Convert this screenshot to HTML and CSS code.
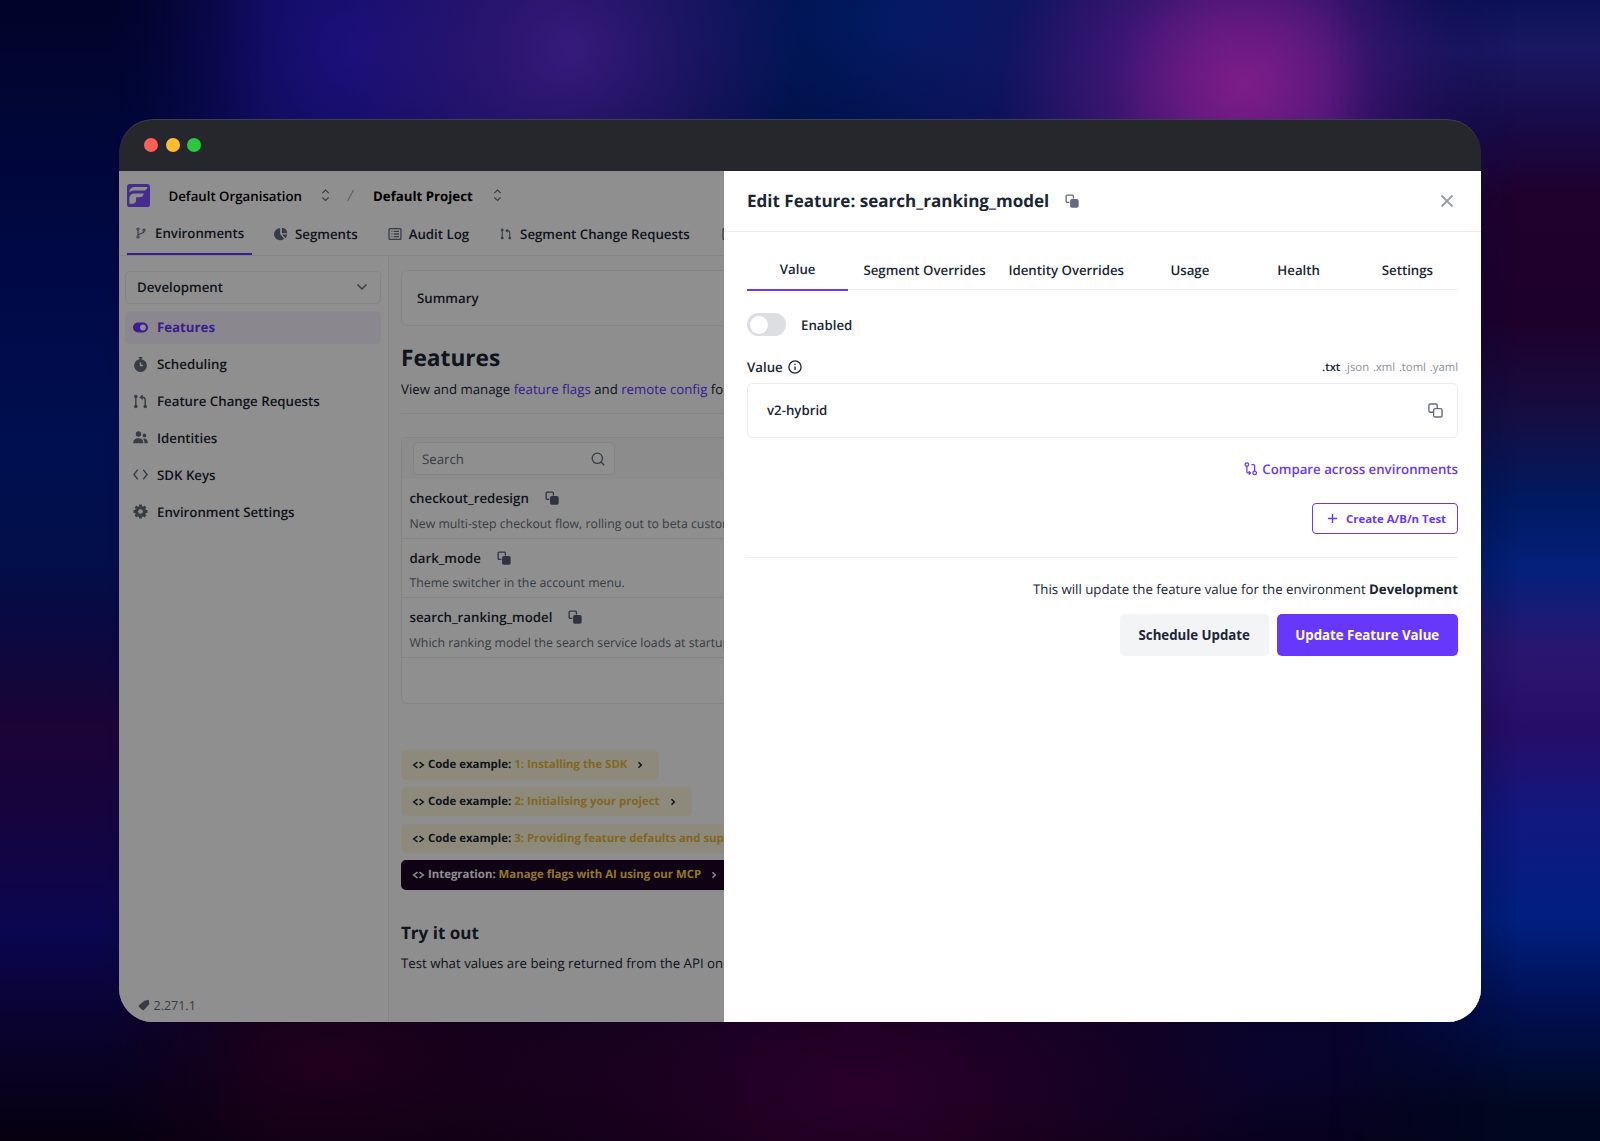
FILE: index.html
```html
<!doctype html>
<html lang="en">
  <head>
    <meta charset="UTF-8" />
    <title>Edit Feature: search_ranking_model</title>
    <link rel="stylesheet" href="styles.css">
  </head>
  <body>
    <svg class="sprite" aria-hidden="true">
      <symbol id="i-sort" viewBox="0 0 10 14"><path d="M1.4 4.6 5 1.2l3.6 3.4M1.4 9.4 5 12.8l3.6-3.4" /></symbol>
      <symbol id="i-branch" viewBox="0 0 16 16"><circle cx="4" cy="2.8" r="1.5" /><circle cx="4" cy="13.2" r="1.5" /><circle cx="12" cy="4.4" r="1.5" /><path d="M4 4.3v7.4M12 6c0 3.6-8 1.6-8 5.5" /></symbol>
      <symbol id="i-pie" viewBox="0 0 16 16"><path class="solid" d="M7 1.2V8l4.6 5.5A7 7 0 1 1 7 1.2zM9 .8A6.8 6.8 0 0 1 15.2 7H9zM9.4 8.6h5.7a6.6 6.6 0 0 1-2.2 4.2z" /></symbol>
      <symbol id="i-list" viewBox="0 0 16 16"><rect x="1.2" y="1.8" width="13.6" height="12.4" rx="1" /><path d="M4 5h1M6.5 5h6M4 8h1M6.5 8h6M4 11h1M6.5 11h6" /></symbol>
      <symbol id="i-pr" viewBox="0 0 16 16"><circle class="solid" cx="3" cy="2.6" r="1.9" /><circle class="solid" cx="3" cy="13.4" r="1.9" /><circle class="solid" cx="13" cy="13.4" r="1.9" /><path d="M3 3v10M13 12V6.5c0-2-1.2-3-3-3H8.5" /><path class="solid" d="M10.3 .6v5.8L6.8 3.5z" /></symbol>
      <symbol id="i-down" viewBox="0 0 12 8"><path d="M1.5 1.5 6 6l4.5-4.5" /></symbol>
      <symbol id="i-toggle" viewBox="0 0 16 16"><rect class="solid" x="0" y="2.7" width="16" height="10.6" rx="5.3" /><circle class="hole" cx="10.6" cy="8" r="3.1" /></symbol>
      <symbol id="i-timer" viewBox="0 0 16 16"><path class="solid" d="M6 0h4v1.4H9v1A6.8 6.8 0 1 1 7 2.4v-1H6z" /><path class="hole-line" d="M8 5.8V9h2.6" /></symbol>
      <symbol id="i-people" viewBox="0 0 16 16"><circle class="solid" cx="5.8" cy="4.2" r="2.9" /><circle class="solid" cx="12.2" cy="5.8" r="2" /><path class="solid" d="M.3 14c0-3.7 2-5.3 5.5-5.3s5.2 1.6 5.2 5.3zM10.8 9.2c2.9-.7 5 .8 5 4.8h-3.6c0-2-.4-3.6-1.4-4.8z" /></symbol>
      <symbol id="i-code" viewBox="0 0 16 16"><path d="M5 3 1 8l4 5M11 3l4 5-4 5" /></symbol>
      <symbol id="i-gear" viewBox="0 0 16 16"><circle cx="8" cy="8" r="4.4" stroke-width="3.2" /><path d="M8 .5v15M.5 8h15M2.7 2.7l10.6 10.6M13.3 2.7 2.7 13.3" stroke-width="3" /><circle class="hole" cx="8" cy="8" r="2.5" /></symbol>
      <symbol id="i-tag" viewBox="0 0 16 16"><path class="solid" d="M8.5 2.2 14.5 1 15 7 7.8 14.6a1.4 1.4 0 0 1-2 0L1.2 10.4a1.4 1.4 0 0 1 0-2z" /></symbol>
      <symbol id="i-search" viewBox="0 0 16 16"><circle cx="7.2" cy="7.2" r="5.9" /><path d="m11.5 11.5 3.6 3.6" /></symbol>
      <symbol id="i-copy" viewBox="0 0 16 16"><path d="M5 9.6H2.5A1.2 1.2 0 0 1 1.3 8.4V2.5a1.2 1.2 0 0 1 1.2-1.2h5.9a1.2 1.2 0 0 1 1.2 1.2V5" /><rect class="solid" x="5.8" y="5.8" width="9.8" height="9.8" rx="2" /></symbol>
      <symbol id="i-copy-line" viewBox="0 0 16 16"><path d="M5.8 9.8H2.5a1.5 1.5 0 0 1-1.5-1.5V2.5A1.5 1.5 0 0 1 2.5 1h5.8a1.5 1.5 0 0 1 1.5 1.5v3.3" /><rect x="6" y="6" width="9" height="9" rx="1.8" /></symbol>
      <symbol id="i-angles" viewBox="0 0 12 10"><path d="M5 2.2 1.2 5 5 7.8M7 2.2 10.8 5 7 7.8" /></symbol>
      <symbol id="i-right" viewBox="0 0 6 10"><path d="m1.5 2.2 2.8 2.8-2.8 2.8" /></symbol>
      <symbol id="i-close" viewBox="0 0 14 14"><path d="m1.5 1.5 11 11M12.5 1.5l-11 11" /></symbol>
      <symbol id="i-info" viewBox="0 0 16 16"><circle cx="8" cy="8" r="7" /><path d="M8 7.4v4M8 4.4v1.2" /></symbol>
      <symbol id="i-compare" viewBox="0 0 16 16"><circle cx="3.4" cy="3" r="2.1" /><circle cx="12.6" cy="13" r="2.1" /><path d="M3.4 5v6.5c0 1 .6 1.5 1.5 1.5h2.6M5.7 11l2 2-2 2M12.6 11V4.5c0-1-.6-1.5-1.5-1.5H8.8" /></symbol>
      <symbol id="i-plus" viewBox="0 0 12 12"><path d="M6 1v10M1 6h10" /></symbol>
    </svg>

    <div class="window">
      <div class="titlebar">
        <span class="dot red"></span>
        <span class="dot yellow"></span>
        <span class="dot green"></span>
      </div>

      <div class="window-body">
        <div class="app">
          <header class="topbar">
            <svg class="logo" viewBox="0 0 24 24">
              <rect width="24" height="24" rx="3" fill="#7b51fb" />
              <path d="M2.5 8.5C2.5 5 5 3 8.5 3h13c-.5 2.6-2.3 3.9-5 3.9H8.3C5.5 6.9 4 7.5 2.5 8.5zM2.5 20.5v-5.3c0-3.6 2.3-5.3 5.500-5.300h9.500c-.5 2.700-2 4-4.800 4H9.500v2.600c0 2.600-1.400 4-3.200 4z" fill="#fff" />
            </svg>
            <span class="org">Default Organisation</span>
            <svg class="sort"><use href="#i-sort" /></svg>
            <span class="slash"></span>
            <span class="project">Default Project</span>
            <svg class="sort"><use href="#i-sort" /></svg>
          </header>

          <nav class="nav">
            <a class="nav-item active"><svg><use href="#i-branch" /></svg>Environments</a>
            <a class="nav-item segments"><svg><use href="#i-pie" /></svg>Segments</a>
            <a class="nav-item audit"><svg><use href="#i-list" /></svg>Audit Log</a>
            <a class="nav-item requests"><svg><use href="#i-pr" /></svg>Segment Change Requests</a>
            <a class="nav-item more"><svg><use href="#i-list" /></svg></a>
          </nav>

          <div class="columns">
            <aside class="sidebar">
              <div class="env-select">Development <svg><use href="#i-down" /></svg></div>
              <a class="side-item active"><svg><use href="#i-toggle" /></svg>Features</a>
              <a class="side-item"><svg><use href="#i-timer" /></svg>Scheduling</a>
              <a class="side-item"><svg><use href="#i-pr" /></svg>Feature Change Requests</a>
              <a class="side-item"><svg><use href="#i-people" /></svg>Identities</a>
              <a class="side-item"><svg><use href="#i-code" /></svg>SDK Keys</a>
              <a class="side-item"><svg><use href="#i-gear" /></svg>Environment Settings</a>
              <div class="version"><svg><use href="#i-tag" /></svg>2.271.1</div>
            </aside>

            <main class="main">
              <div class="summary">Summary</div>
              <h2>Features</h2>
              <p class="intro">View and manage <a>feature flags</a> and <a>remote config</a> for your selected environment.</p>
              <hr />
              <div class="table">
                <div class="table-head">
                  <div class="search">Search <svg><use href="#i-search" /></svg></div>
                </div>
                <div class="flag">
                  <div class="flag-name">checkout_redesign <svg><use href="#i-copy" /></svg></div>
                  <div class="flag-desc">New multi-step checkout flow, rolling out to beta customers.</div>
                </div>
                <div class="flag">
                  <div class="flag-name">dark_mode <svg><use href="#i-copy" /></svg></div>
                  <div class="flag-desc">Theme switcher in the account menu.</div>
                </div>
                <div class="flag">
                  <div class="flag-name">search_ranking_model <svg><use href="#i-copy" /></svg></div>
                  <div class="flag-desc">Which ranking model the search service loads at startup.</div>
                </div>
              </div>

              <div class="examples">
                <div class="example"><svg class="angles"><use href="#i-angles" /></svg><span>Code example: <b>1: Installing the SDK</b></span><svg class="right"><use href="#i-right" /></svg></div>
                <div class="example"><svg class="angles"><use href="#i-angles" /></svg><span>Code example: <b>2: Initialising your project</b></span><svg class="right"><use href="#i-right" /></svg></div>
                <div class="example"><svg class="angles"><use href="#i-angles" /></svg><span>Code example: <b>3: Providing feature defaults and support</b></span><svg class="right"><use href="#i-right" /></svg></div>
                <div class="example dark"><svg class="angles"><use href="#i-angles" /></svg><span>Integration: <b>Manage flags with AI using our MCP</b></span><svg class="right"><use href="#i-right" /></svg></div>
              </div>

              <h3>Try it out</h3>
              <p class="try">Test what values are being returned from the API on this environment.</p>
            </main>
          </div>
        </div>

        <div class="backdrop"></div>

        <section class="drawer">
          <div class="drawer-head">
            <h1>Edit Feature: search_ranking_model</h1>
            <svg class="copy"><use href="#i-copy" /></svg>
            <svg class="close"><use href="#i-close" /></svg>
          </div>
          <div class="drawer-body">
            <div class="tabs">
              <a class="tab active">Value</a>
              <a class="tab wide">Segment Overrides</a>
              <a class="tab wide">Identity Overrides</a>
              <a class="tab">Usage</a>
              <a class="tab">Health</a>
              <a class="tab">Settings</a>
            </div>
            <div class="enabled"><span class="switch"></span>Enabled</div>
            <div class="value-label">
              <span>Value</span>
              <svg><use href="#i-info" /></svg>
              <div class="formats"><span class="on">.txt</span><span>.json</span><span>.xml</span><span>.toml</span><span>.yaml</span></div>
            </div>
            <div class="value-box">v2-hybrid <svg><use href="#i-copy-line" /></svg></div>
            <a class="compare"><svg><use href="#i-compare" /></svg>Compare across environments</a>
            <button class="ab-btn"><svg><use href="#i-plus" /></svg>Create A/B/n Test</button>
            <hr />
            <p class="notice">This will update the feature value for the environment <strong>Development</strong></p>
            <div class="actions">
              <button class="btn secondary">Schedule Update</button>
              <button class="btn primary">Update Feature Value</button>
            </div>
          </div>
        </section>
      </div>
    </div>
  </body>
</html>
```
FILE: styles.css
```css
:root {
  --purple: #6837fc;
  --text: #1a2634;
  --grey: #656d7b;
  --line: #ebecee;
}

* {
  box-sizing: border-box;
}

body {
  margin: 0;
  width: 1600px;
  height: 1141px;
  overflow: hidden;
  padding: 119px 119px 0;
  font-family: "Open Sans", sans-serif;
  font-size: 13.25px;
  line-height: 20px;
  text-rendering: geometricPrecision;
  color: var(--text);
  background:
    radial-gradient(ellipse 130px 120px at 1245px 85px, rgba(140, 30, 140, 0.6), transparent),
    radial-gradient(ellipse 240px 220px at 1240px 85px, rgba(125, 28, 140, 0.75), transparent),
    radial-gradient(ellipse 420px 260px at 1260px 70px, rgba(44, 22, 125, 0.8), transparent),
    radial-gradient(ellipse 230px 230px at 570px 50px, rgba(60, 28, 130, 0.9), transparent),
    radial-gradient(ellipse 260px 320px at 350px 50px, rgba(30, 16, 130, 0.9), transparent),
    radial-gradient(ellipse 360px 240px at 900px 20px, rgba(0, 28, 100, 0.95), transparent),
    radial-gradient(ellipse 420px 220px at 860px 1090px, rgba(44, 0, 44, 0.95), transparent),
    radial-gradient(ellipse 400px 180px at 330px 1060px, rgba(34, 0, 30, 0.9), transparent),
    radial-gradient(ellipse 330px 150px at 1290px 1060px, rgba(10, 4, 54, 0.8), transparent),
    linear-gradient(#02083a, #030526 70%, #06000f);
}

/* colour bands down both sides of the wallpaper */
body::before,
body::after {
  content: "";
  position: absolute;
  z-index: -1;
  top: 0;
  height: 1141px;
}

body::before {
  left: 0;
  width: 260px;
  background: linear-gradient(#010428, #00063a 150px, #000a48 300px, #000f50 450px, #020f4a 550px, #0c0840 640px, #1c0436 730px, #140440 830px, #0a0650 930px, #0a0330 1020px, #060010);
  mask-image: linear-gradient(90deg, #000 40%, transparent);
}

body::after {
  left: 1330px;
  width: 270px;
  background: linear-gradient(#0c1258, #1a1862 50px, #180a45 130px, #20002c 200px, #1e002c 320px, #160d40 410px, #001a60 500px, #04207a 570px, #2a1670 650px, #260e68 730px, #101880 820px, #001f80 920px, #001050 1010px, #000820 1110px);
  mask-image: linear-gradient(90deg, transparent, #000 70%);
}

h1,
h2,
h3,
p {
  margin: 0;
}

b {
  font-weight: 700;
}

hr {
  border: 0;
  height: 1px;
  margin: 0;
  background: var(--line);
}

svg {
  fill: none;
  stroke: currentColor;
  stroke-width: 1.5;
  flex: none;
}

.sprite {
  display: none;
}

.solid {
  fill: currentColor;
  stroke: none;
}

.hole {
  fill: #fff;
  stroke: none;
}

.hole-line {
  stroke: #fff;
}

.window {
  width: 1362px;
  height: 903px;
  border-radius: 34px;
  overflow: hidden;
  background: #25272d;
}

.titlebar {
  height: 52px;
  display: flex;
  align-items: center;
  gap: 7.6px;
  padding: 0 0 1px 25px;
  border-radius: 34px 34px 0 0;
  box-shadow: inset 0 1px 0 0 rgba(120, 125, 150, 0.3);
}

.dot {
  width: 14px;
  height: 14px;
  border-radius: 50%;
}

.red {
  background: #ff5f57;
}

.yellow {
  background: #febc2e;
}

.green {
  background: #28c840;
}

.window-body {
  position: relative;
  height: 851px;
  overflow: hidden;
  background: #fff;
}

.app {
  height: 100%;
  display: flex;
  flex-direction: column;
  white-space: nowrap;
}

.topbar {
  height: 49px;
  display: flex;
  align-items: center;
  padding-left: 8px;
  color: #000;
}

.logo {
  width: 23px;
  height: 23px;
  stroke: none;
}

.org {
  margin-left: 18.5px;
  padding-top: 1px;
  width: 133.5px;
  font-weight: 600;
}

.project {
  margin-left: 22px;
  padding-top: 1px;
  width: 101px;
  font-weight: 700;
}

.sort {
  width: 9px;
  height: 12.5px;
  margin-left: 19px;
  color: var(--grey);
  stroke-width: 1.4;
}

.slash {
  width: 1px;
  height: 13px;
  margin-left: 20px;
  background: #9da4ae;
  transform: rotate(28deg);
}

.nav {
  height: 36px;
  display: flex;
  padding-left: 8px;
  border-bottom: 1px solid var(--line);
  font-weight: 600;
  line-height: 26px;
}

.nav-item {
  display: flex;
  align-items: center;
  height: 28px;
}

.nav-item svg {
  width: 14px;
  height: 14px;
  margin-right: 7px;
  color: var(--grey);
}

.nav-item.active {
  width: 125px;
  height: 35px;
  padding: 0 0 7px 8px;
  border-bottom: 2px solid var(--purple);
}

.nav-item.active svg {
  width: 12px;
  height: 12px;
  margin-right: 8px;
}

.nav-item.segments {
  margin-left: 22px;
}

.nav-item.audit {
  margin-left: 30px;
}

.nav-item.requests {
  margin-left: 31px;
}

.nav-item.requests svg {
  width: 12px;
  height: 12px;
  margin-right: 8px;
}

.nav-item.more {
  margin-left: 32.5px;
}

.columns {
  flex: 1;
  display: flex;
}

.sidebar {
  width: 270px;
  padding: 15px 7px 6px 6px;
  border-right: 1px solid var(--line);
  display: flex;
  flex-direction: column;
}

.env-select {
  height: 33px;
  padding: 0 12px 1px 11px;
  margin-bottom: 7px;
  border: 1px solid var(--line);
  border-radius: 5px;
  display: flex;
  align-items: center;
  justify-content: space-between;
  font-weight: 600;
}

.env-select svg {
  width: 12px;
  height: 8px;
  color: var(--grey);
}

.side-item {
  height: 32.8px;
  margin-bottom: 4.06px;
  padding-left: 8px;
  border-radius: 5px;
  display: flex;
  align-items: center;
  gap: 9px;
  font-weight: 600;
}

.side-item svg {
  width: 15px;
  height: 15px;
  color: var(--grey);
}

.side-item.active {
  background: #f6f3fe;
  color: var(--purple);
  font-weight: 700;
}

.side-item.active svg {
  color: var(--purple);
}

.version {
  margin-top: auto;
  padding-left: 13px;
  display: flex;
  align-items: center;
  gap: 3.5px;
  font-size: 12.5px;
  color: var(--grey);
}

.version svg {
  width: 12px;
  height: 12px;
  margin-bottom: 3px;
}

.main {
  flex: 1;
  min-width: 0;
  padding: 14px 0 0 12px;
  background: #fdfdfe;
}

.summary {
  height: 56px;
  padding-left: 15px;
  border: 1px solid var(--line);
  border-radius: 6px;
  background: #fff;
  line-height: 55px;
  font-weight: 600;
}

h2 {
  margin-top: 16px;
  font-size: 22.7px;
  line-height: 32px;
}

.intro {
  margin: 5px 0 14px;
}

.intro a {
  color: var(--purple);
}

.table {
  margin-top: 23px;
  height: 267px;
  border: 1px solid var(--line);
  border-radius: 6px;
  background: #fff;
}

.table-head {
  height: 41px;
  padding: 4px 0 0 11px;
  background: #fafafb;
}

.search {
  width: 202px;
  height: 33px;
  padding: 1px 9px 0 8px;
  border: 1px solid var(--line);
  border-radius: 5px;
  background: #fff;
  color: var(--grey);
  display: flex;
  align-items: center;
  justify-content: space-between;
}

.search svg {
  width: 14px;
  height: 14px;
}

.flag {
  height: 59.5px;
  padding: 9.2px 0 0 7.5px;
  border-bottom: 1px solid var(--line);
}

.flag-name {
  display: flex;
  align-items: center;
  gap: 16px;
  font-weight: 600;
}

.flag-name svg {
  width: 14px;
  height: 14px;
  color: #555a72;
}

.flag-desc {
  margin-top: 5.5px;
  font-size: 12.3px;
  color: var(--grey);
}

.examples {
  margin-top: 46px;
  display: flex;
  flex-direction: column;
  align-items: flex-start;
  gap: 7.2px;
}

.example {
  height: 29.6px;
  padding: 0.5px 16px 0 11px;
  border-radius: 5px;
  background: #fcf6dc;
  display: flex;
  align-items: center;
  font-size: 11.4px;
  font-weight: 700;
}

.example b {
  color: #e6b73f;
}

.example .angles {
  width: 13px;
  height: 10px;
  margin-right: 3px;
}

.example .right {
  width: 6px;
  height: 10px;
  margin-left: 10px;
}

.example.dark {
  background: #1d0427;
  color: #fff;
}

.example.dark b {
  color: #ffd84a;
}

h3 {
  margin-top: 31px;
  font-size: 17.05px;
  line-height: 24px;
}

.try {
  margin-top: 8px;
}

/* drawer over the app */
.backdrop {
  position: absolute;
  inset: 0;
  background: rgba(0, 0, 0, 0.44);
}

.drawer {
  position: absolute;
  top: 0;
  right: 0;
  width: 757px;
  height: 100%;
  background: #fff;
}

.drawer-head {
  height: 61px;
  padding: 0 27px 0 23px;
  border-bottom: 1px solid var(--line);
  display: flex;
  align-items: center;
}

h1 {
  font-size: 17.05px;
  line-height: 24px;
}

.copy {
  width: 14px;
  height: 14px;
  margin-left: 16px;
  color: #656a80;
}

.close {
  width: 14px;
  height: 14px;
  margin-left: auto;
  color: #9a9da3;
  stroke-width: 1.8;
}

.drawer-body {
  padding: 20px 23px 0;
  display: flex;
  flex-direction: column;
}

.tabs {
  height: 38px;
  display: flex;
  gap: 7.6px;
  border-bottom: 1px solid var(--line);
  font-weight: 600;
}

.tab {
  flex: 1 1 0;
  height: 39px;
  padding: 8px 0;
  text-align: center;
  white-space: nowrap;
}

.tab.wide {
  flex: none;
  padding: 8px 7.6px;
}

.tab.active {
  padding-top: 7px;
  border-bottom: 2px solid var(--purple);
}

.enabled {
  margin-top: 23px;
  height: 23px;
  display: flex;
  align-items: center;
  gap: 15px;
  font-weight: 600;
}

.switch {
  width: 39px;
  height: 23px;
  padding: 2.5px;
  border-radius: 12px;
  background: #dcdee1;
}

.switch::before {
  content: "";
  display: block;
  width: 18px;
  height: 18px;
  border-radius: 50%;
  background: #fff;
}

.value-label {
  margin-top: 21px;
  height: 20px;
  display: flex;
  align-items: center;
  gap: 5px;
  font-weight: 600;
}

.value-label svg {
  width: 14px;
  height: 14px;
}

.formats {
  margin-left: auto;
  padding-top: 1px;
  display: flex;
  gap: 3.8px;
  font-size: 11.3px;
  font-weight: 400;
  color: #8b909a;
}

.formats .on {
  color: var(--text);
  font-weight: 600;
}

.value-box {
  margin-top: 6px;
  height: 55px;
  padding: 0 14px 1px 19px;
  border: 1px solid var(--line);
  border-radius: 5px;
  display: flex;
  align-items: center;
  justify-content: space-between;
  font-weight: 600;
}

.value-box svg {
  width: 15px;
  height: 15px;
  margin-top: 1px;
  color: var(--grey);
}

.compare {
  margin-top: 21px;
  align-self: flex-end;
  display: flex;
  align-items: center;
  gap: 5px;
  color: var(--purple);
  font-weight: 600;
}

.compare svg {
  width: 13.5px;
  height: 13.5px;
}

.ab-btn {
  margin: 24px 0 23px;
  align-self: flex-end;
  width: 146.5px;
  height: 31px;
  padding: 0 11px 0 14px;
  border: 1px solid var(--purple);
  border-radius: 4px;
  background: #fff;
  color: var(--purple);
  display: flex;
  align-items: center;
  justify-content: space-between;
  font: 700 11.4px "Open Sans", sans-serif;
}

.ab-btn svg {
  width: 11px;
  height: 11px;
}

.notice {
  margin-top: 21px;
  text-align: right;
}

.actions {
  margin-top: 15px;
  display: flex;
  justify-content: flex-end;
  gap: 7.5px;
}

.btn {
  width: 149.5px;
  height: 42px;
  padding: 0;
  border: 0;
  border-radius: 5px;
  font: 700 13.25px "Open Sans", sans-serif;
}

.secondary {
  background: #f3f4f6;
  color: var(--text);
}

.primary {
  width: 181.5px;
  background: var(--purple);
  color: #fff;
}
```
